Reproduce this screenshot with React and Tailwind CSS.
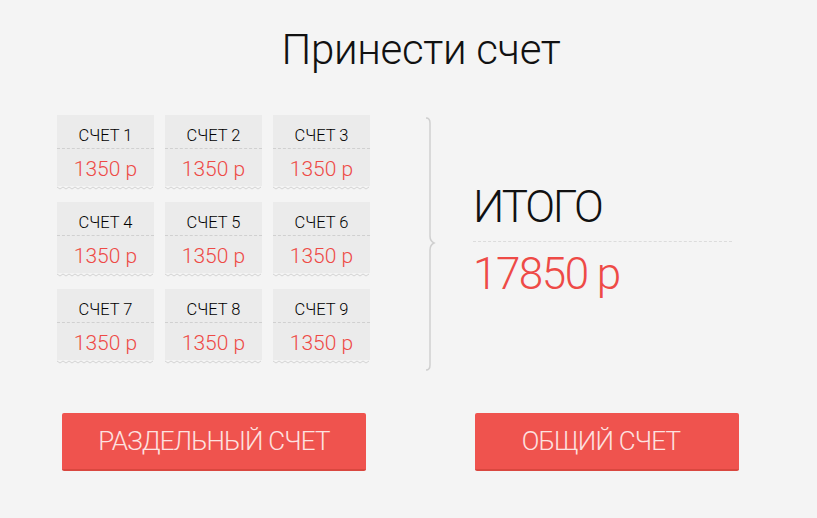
const bills = [1, 2, 3, 4, 5, 6, 7, 8, 9];

function Zigzag() {
  const pts = [];
  for (let x = 0, i = 0; x <= 97; x += 3, i++) {
    pts.push(`${x},${i % 2 === 0 ? 1 : 3}`);
  }
  return (
    <svg width="97" height="4" className="block" viewBox="0 0 97 4">
      <polyline points={pts.join(' ')} fill="none" stroke="#d4d4d4" strokeWidth="1" />
    </svg>
  );
}

function Bill({ n }) {
  return (
    <div className="w-[97px] h-[75px] flex flex-col">
      <div className="bg-[#ebebeb] flex-1 flex flex-col">
        <div className="h-[34px] flex items-center justify-center text-[16.5px] text-black font-light border-b border-dashed border-[#d0d0d0] pt-[10px]">
          СЧЕТ {n}
        </div>
        <div className="flex-1 flex items-center justify-center text-[21px] text-[#ee4a46] font-light pt-[5px]">1350 р</div>
      </div>
      <Zigzag />
    </div>
  );
}

function Brace() {
  return (
    <svg width="12" height="254" viewBox="0 0 12 254" className="block">
      <path
        d="M1 1 Q5 1 5 6 L5 119 Q5 124 9 126 Q5 128 5 133 L5 248 Q5 253 1 253"
        fill="none"
        stroke="#cfcfcf"
        strokeWidth="1.5"
      />
    </svg>
  );
}

export default function App() {
  return (
    <div className="w-[817px] h-[518px] bg-[#f4f4f4] flex flex-col font-['Roboto',sans-serif] font-light">
      <h1 className="mt-[29px] text-[42px] leading-none text-[#111] font-light text-center pl-[25px] tracking-[-0.3px]">Принести счет</h1>

      <div className="flex items-start mt-[44px] ml-[57px]">
        <div className="grid grid-cols-[97px_97px_97px] gap-x-[11px] gap-y-[12px]">
          {bills.map((n) => (
            <Bill key={n} n={n} />
          ))}
        </div>
        <div className="ml-[55px] mt-[2px]">
          <Brace />
        </div>
        <div className="ml-[36px] mt-[70px] w-[259px]">
          <div className="text-[44px] leading-none text-[#111] pb-[12px] border-b border-dashed border-[#dcdcdc] tracking-[-2px]">ИТОГО</div>
          <div className="mt-[10px] text-[44px] leading-none text-[#ee4a46] tracking-[-1.5px]">17850 р</div>
        </div>
      </div>

      <div className="flex mt-[42px] ml-[62px] gap-[109px]">
        <button className="w-[304px] h-[58px] bg-[#ef534e] border-b-2 border-[#d9473f] rounded-[2px] text-[26px] text-[#fde2e0] font-light tracking-[-0.8px]">
          РАЗДЕЛЬНЫЙ СЧЕТ
        </button>
        <button className="w-[264px] h-[58px] bg-[#ef534e] border-b-2 border-[#d9473f] rounded-[2px] text-[26px] text-[#fde2e0] font-light tracking-[-0.8px] pr-[12px]">
          ОБЩИЙ СЧЕТ
        </button>
      </div>
    </div>
  );
}
